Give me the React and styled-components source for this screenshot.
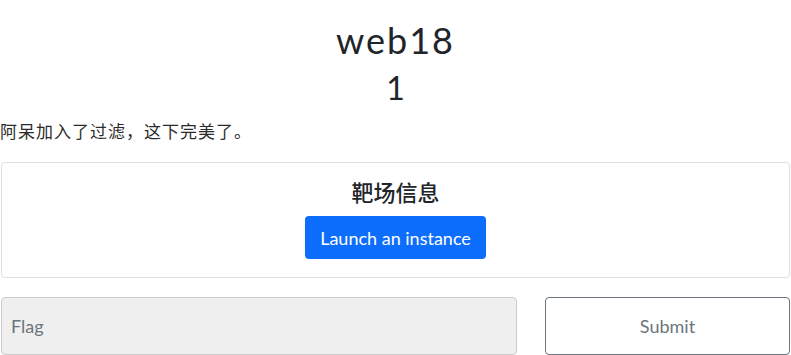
import styled, { createGlobalStyle } from "styled-components";

const Global = createGlobalStyle`
  body {
    margin: 0;
    background: #fff;
    font-family: Lato, "Noto Sans CJK SC", sans-serif;
    color: #212529;
  }
`

const Page = styled.div`
  width: 791px;
  height: 355px;
  overflow: hidden;
`

const Name = styled.h2`
  margin: 20px 0 0;
  text-align: center;
  font-size: 36px;
  font-weight: 400;
  letter-spacing: 2px;
  line-height: 40px;
  color: #212529;
`

const Value = styled.h3`
  margin: 10px 0 0;
  text-align: center;
  font-size: 32px;
  font-weight: 400;
  line-height: 36px;
`

const Desc = styled.p`
  margin: 13px 0 0;
  font-family: "Noto Sans CJK SC", sans-serif;
  font-size: 17px;
  letter-spacing: 1px;
  line-height: 24px;
  color: #2b2b2b;
`

const Card = styled.div`
  margin: 19px 1px 0;
  height: 116px;
  box-sizing: border-box;
  border: 1px solid #dfdfdf;
  border-radius: 4px;
  display: flex;
  flex-direction: column;
  align-items: center;
  padding-top: 15px;
`

const CardTitle = styled.h5`
  margin: 0;
  font-size: 22px;
  font-weight: 500;
  line-height: 30px;
`

const LaunchButton = styled.button`
  margin-top: 8px;
  height: 43px;
  padding: 0 15px;
  border: none;
  border-radius: 4px;
  background: #0d6efd;
  color: #fff;
  font-family: Lato, sans-serif;
  font-size: 18px;
`

const SubmitRow = styled.div`
  margin-top: 19px;
  display: flex;
  gap: 28px;
  padding: 0 1px;
`

const FlagInput = styled.input`
  width: 516px;
  height: 58px;
  box-sizing: border-box;
  border: 1px solid #ccc;
  border-radius: 4px;
  background: #efefef;
  padding: 0 9px;
  font-family: Lato, sans-serif;
  font-size: 18px;
  color: #212529;
  &::placeholder { color: #6c757d; }
`

const SubmitButton = styled.button`
  flex: 1;
  height: 58px;
  border: 1px solid #6c757d;
  border-radius: 4px;
  background: #fff;
  color: #6c757d;
  font-family: Lato, sans-serif;
  font-size: 18px;
`

export default function App() {
  return (
    <Page>
      <Global />
      <Name>web18</Name>
      <Value>1</Value>
      <Desc>阿呆加入了过滤，这下完美了。</Desc>
      <Card>
        <CardTitle>靶场信息</CardTitle>
        <LaunchButton>Launch an instance</LaunchButton>
      </Card>
      <SubmitRow>
        <FlagInput placeholder="Flag" disabled />
        <SubmitButton>Submit</SubmitButton>
      </SubmitRow>
    </Page>
  )
}
